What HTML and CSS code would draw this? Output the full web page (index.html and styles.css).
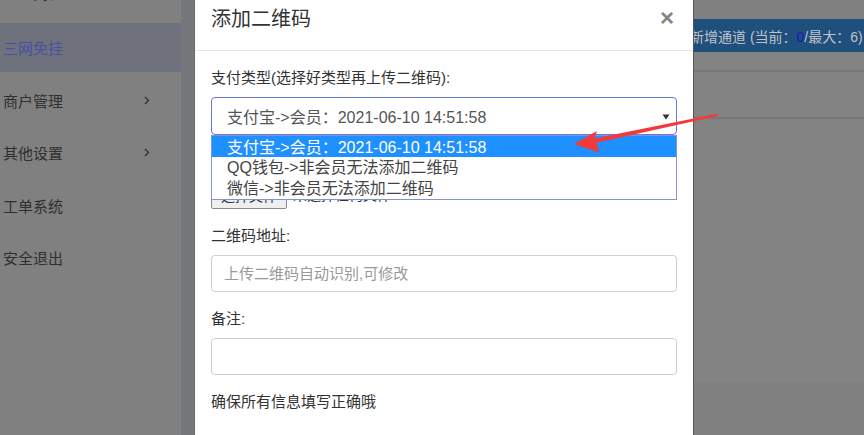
FILE: index.html
```html
<!DOCTYPE html>
<html lang="zh-CN">
<head>
<meta charset="utf-8">
<title>添加二维码</title>
<link rel="stylesheet" href="styles.css">
</head>
<body>
<div class="app">
  <aside class="sidebar">
    <ul class="menu">
      <li class="item item-first">通道列表</li>
      <li class="item active">三网免挂</li>
      <li class="item">商户管理<svg class="chev" width="6" height="9" viewBox="0 0 6 9"><path d="M1 1l3.5 3.5L1 8" stroke="#2f2f2f" fill="none" stroke-width="1.3"/></svg></li>
      <li class="item">其他设置<svg class="chev" width="6" height="9" viewBox="0 0 6 9"><path d="M1 1l3.5 3.5L1 8" stroke="#2f2f2f" fill="none" stroke-width="1.3"/></svg></li>
      <li class="item">工单系统</li>
      <li class="item">安全退出</li>
    </ul>
  </aside>
  <div class="strip"></div>
  <main class="main">
    <div class="toolbar"><span class="toolbar-text">新增通道 (当前<span class="fw">：</span><b class="cur">0</b>/最大<span class="fw">：</span>6)</span></div>
    <div class="table">
      <div class="row row-head"></div>
      <div class="row"></div>
    </div>
  </main>
</div>

<div class="modal">
  <div class="modal-header">
    <h4 class="modal-title">添加二维码</h4>
    <span class="close">×</span>
  </div>
  <div class="modal-body">
    <div class="group">
      <label class="label">支付类型(选择好类型再上传二维码):</label>
      <div class="select">
        <span>支付宝-&gt;会员<span class="fw">：</span>2021-06-10 14:51:58</span>
        <svg class="caret" width="8" height="6" viewBox="0 0 8 6"><path d="M0.5 0.5h7L4 5.5z" fill="#333"/></svg>
      </div>
      <ul class="dropdown">
        <li class="opt selected">支付宝-&gt;会员<span class="fw">：</span>2021-06-10 14:51:58</li>
        <li class="opt">QQ钱包-&gt;非会员无法添加二维码</li>
        <li class="opt">微信-&gt;非会员无法添加二维码</li>
      </ul>
    </div>
    <div class="group">
      <label class="label">上传二维码:</label>
      <div class="file"><span class="file-btn">选择文件</span><span class="file-text">未选择任何文件</span></div>
    </div>
    <div class="group">
      <label class="label">二维码地址:</label>
      <div class="input placeholder">上传二维码自动识别,可修改</div>
    </div>
    <div class="group">
      <label class="label">备注:</label>
      <div class="input"></div>
    </div>
    <p class="note">确保所有信息填写正确哦</p>
  </div>
</div>

<svg class="arrow" width="864" height="435" viewBox="0 0 864 435">
  <polygon points="574,144 597,131 594.5,138.5 717,113.8 717.5,116 596.5,142.8 599,152.5" fill="#f23a3a"/>
</svg>
</body>
</html>
```

FILE: styles.css
```css
html, body {
  margin: 0;
  height: 100%;
  overflow: hidden;
}
body {
  font-family: "Liberation Sans", "Noto Sans CJK SC", sans-serif;
  color: #333;
  background: #7a7b7d;
  position: relative;
}
ul { list-style: none; margin: 0; padding: 0; }

.fw {
  font-family: "Noto Sans CJK TC", sans-serif;
}

.app {
  display: flex;
  height: 100%;
}
.sidebar {
  width: 181px;
  background: #808080;
  flex: none;
}
.menu {
  margin-top: -36.5px;
}
.item {
  height: 49px;
  margin-bottom: 3.5px;
  display: flex;
  align-items: center;
  justify-content: space-between;
  padding: 0 31px 0 3px;
  font-size: 15px;
  color: #2f2f2f;
}
.item-first {
  height: 56px;
  align-items: flex-start;
  padding-top: 20px;
  box-sizing: border-box;
  line-height: 20px;
}
.item.active {
  background: #6f727c;
  color: #4650a6;
}
.strip {
  width: 13px;
  background: #76777a;
  flex: none;
}
.main {
  flex: 1;
  background: #808080;
}
.toolbar {
  margin-top: 19px;
  height: 33px;
  background: #1f4f7d;
  display: flex;
  align-items: center;
  padding-left: 496px;
  white-space: nowrap;
  overflow: hidden;
}
.toolbar-text {
  font-size: 14px;
  color: #bfc3c8;
}
.cur {
  font-weight: normal;
  color: #1a1ab8;
}
.table {
  background: #838383;
  height: 330px;
}
.row {
  border-bottom: 2px solid #777;
}
.row-head { height: 18px; }
.row + .row { height: 45px; }

.modal {
  position: absolute;
  left: 194px;
  top: -12px;
  width: 498px;
  height: 470px;
  background: #fff;
  border-left: 1px solid #6a6a6a;
  border-right: 1px solid #555;
}
.modal-header {
  display: flex;
  align-items: center;
  justify-content: space-between;
  padding: 16px;
  border-bottom: 1px solid #e5e5e5;
}
.modal-title {
  margin: 0;
  font-size: 20px;
  line-height: 30px;
  font-weight: normal;
  color: #333;
}
.close {
  font-size: 24px;
  line-height: 20px;
  font-weight: bold;
  color: #858585;
  margin-right: 3px;
  margin-top: -2px;
}
.modal-body {
  padding: 16px;
}
.group {
  position: relative;
  margin-bottom: 16px;
}
.label {
  display: block;
  font-size: 15px;
  line-height: 21px;
  margin-bottom: 9px;
  color: #333;
}
.select {
  height: 36px;
  border: 1px solid #6b74e6;
  border-radius: 4px;
  display: flex;
  align-items: center;
  justify-content: space-between;
  padding: 0 6px 0 15px;
  font-size: 16px;
  color: #555;
}
.caret { margin-top: 1px; }
.dropdown {
  position: absolute;
  left: 0;
  right: 0;
  top: 68px;
  background: #fff;
  border: 1px solid #8093d6;
  z-index: 2;
}
.opt {
  height: 21px;
  line-height: 21px;
  padding-left: 15px;
  font-size: 16px;
  color: #444;
}
.opt.selected {
  background: #1e90ff;
  color: #fff;
}
.file {
  display: flex;
  align-items: flex-start;
  gap: 6px;
  padding-top: 5px;
}
.file-btn {
  display: inline-block;
  height: 21px;
  line-height: 18px;
  width: 74px;
  text-align: center;
  font-size: 14px;
  background: #efefef;
  border: 1px solid #8a8a8a;
  border-radius: 2px;
}
.file-text {
  font-size: 14px;
  line-height: 18px;
}
.input {
  height: 35px;
  border: 1px solid #ccd0d8;
  border-radius: 4px;
  padding: 0 12px;
  font-size: 15px;
  line-height: 35px;
}
.placeholder {
  color: #999;
}
.note {
  margin: 0;
  font-size: 15px;
  line-height: 21px;
}
.arrow {
  position: absolute;
  left: 0;
  top: 0;
  pointer-events: none;
  z-index: 5;
}
```
